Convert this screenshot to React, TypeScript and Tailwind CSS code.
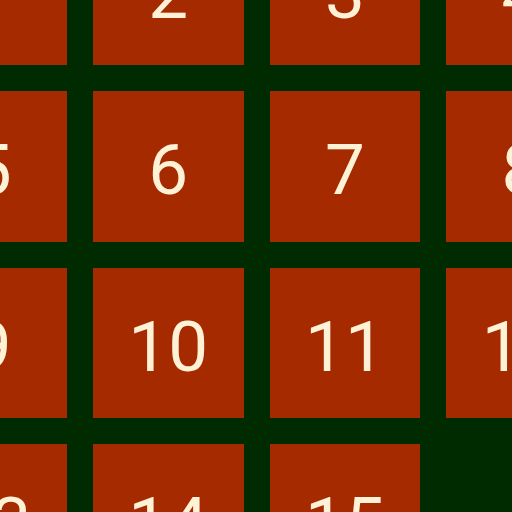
const tiles: (number | null)[] = [1, 2, 3, 4, 5, 6, 7, 8, 9, 10, 11, 12, 13, 14, 15, null]

export default function App() {
  return (
    <div className="w-[512px] h-[512px] overflow-hidden bg-[#002a00]">
      <div className="grid grid-cols-[repeat(4,150.5px)] grid-rows-[repeat(4,150.5px)] gap-x-[26.17px] gap-y-[26px] -ml-[83.67px] -mt-[85.5px] w-max">
        {tiles.map((n, i) =>
          n === null ? (
            <div key={i} />
          ) : (
            <div
              key={i}
              className="bg-[#a62a00] flex items-center justify-center pt-[7px] text-[#fdf1d6] text-[71px] leading-none font-['Roboto',sans-serif]"
            >
              {n}
            </div>
          )
        )}
      </div>
    </div>
  )
}
